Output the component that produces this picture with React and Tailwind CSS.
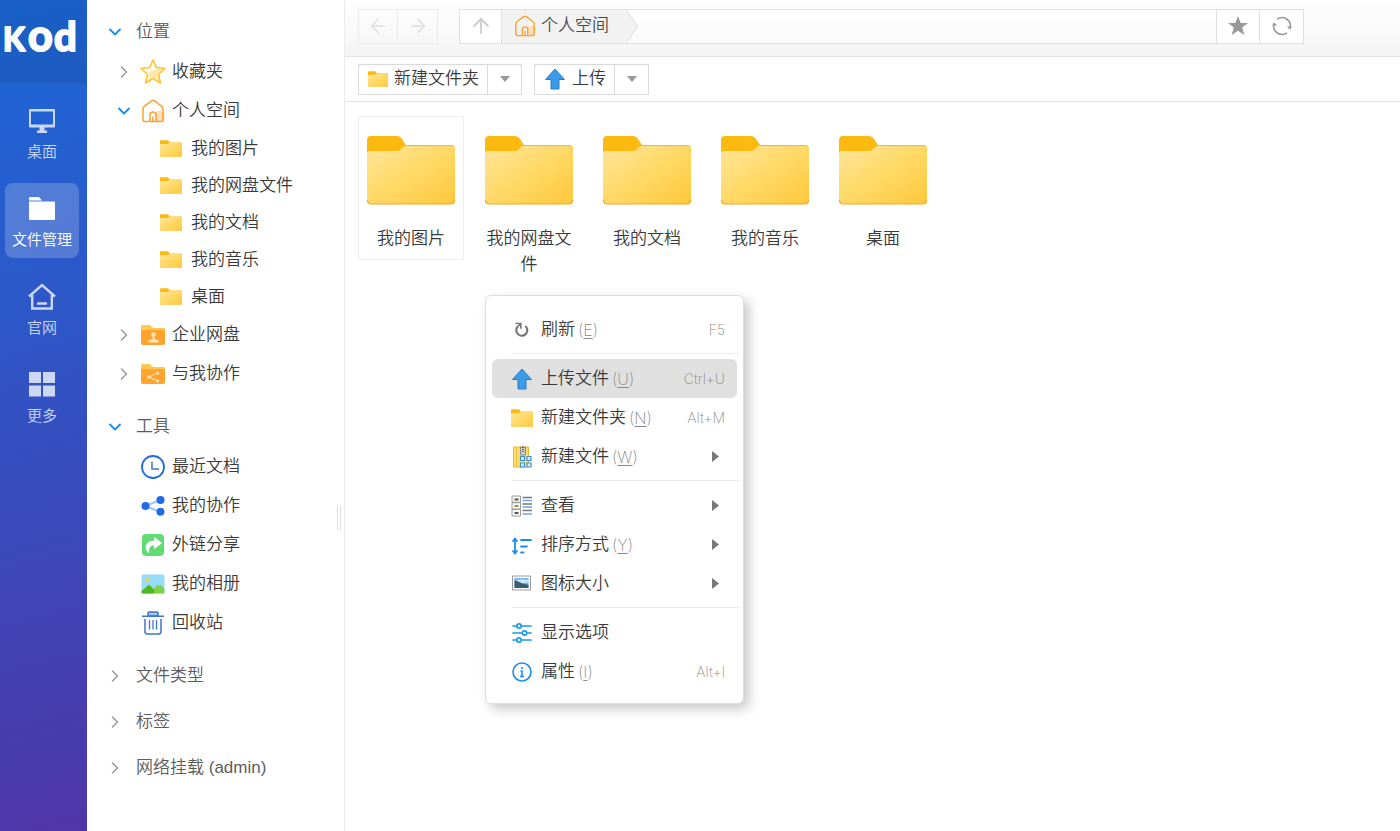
// ============================================
// App.jsx — kod file manager: rail, folder tree, toolbar, file grid, context menu
// ============================================
import { useId, useState } from 'react';
import { ArrowLeft, ArrowRight, ArrowUp, ChevronDown, ChevronRight } from 'lucide-react';

/* ---------- Folder icons ---------- */

const Folder = ({ className }) => {
    const id = useId();
    return (
        <svg className={className} viewBox="0 0 88 70" preserveAspectRatio="none" fill="none">
            <defs>
                <linearGradient id={id} x1="0" y1="0" x2="1" y2="1">
                    <stop offset="0" stopColor="#ffe599" />
                    <stop offset="0.5" stopColor="#ffd966" />
                    <stop offset="1" stopColor="#ffc83a" />
                </linearGradient>
            </defs>
            <path d="M0 5a4 4 0 014-4h25c3 0 5 1 6 3l4 6h45a4 4 0 014 4v20H0z" fill="#fcb90f" />
            <path d="M0 19a3 3 0 013-3h27c4 0 5-5 9-5h45a4 4 0 014 4v50a4 4 0 01-4 4H4a4 4 0 01-4-4z" fill={`url(#${id})`} />
            <path d="M.5 65a3.500 3.500 0 003.500 4h80a3.500 3.500 0 003.500-4" stroke="#eba92c" strokeWidth="1.200" />
        </svg>
    );
};

const OrangeFolder = ({ children }) => (
    <svg className="w-6 h-6" viewBox="0 0 24 24" fill="none">
        <path d="M0 3.500A1.500 1.500 0 011.500 2H9l3 3h11a1.500 1.500 0 011 1.500V12H0z" fill="#ffc84f" />
        <path d="M0 9a2 2 0 012-2h20a2 2 0 012 2v11a2 2 0 01-2 2H2a2 2 0 01-2-2z" fill="#ffa42e" />
        {children}
    </svg>
);

const CompanyFolder = () => (
    <OrangeFolder>
        <circle cx="12.500" cy="11.500" r="2.200" fill="#ffe3bd" />
        <path d="M11.500 12h2v4l4 1.500V19.500H7.500v-2l4-1.500z" fill="#ffe3bd" />
    </OrangeFolder>
);

const SharedFolder = () => (
    <OrangeFolder>
        <path d="M16.500 11L8 15l8.500 4" stroke="#ffe3bd" strokeWidth="1" />
        <circle cx="16.500" cy="11" r="1.500" fill="#ffe3bd" />
        <circle cx="8" cy="15" r="1.800" fill="#ffe3bd" />
        <circle cx="16.500" cy="19" r="1.500" fill="#ffe3bd" />
    </OrangeFolder>
);

/* ---------- Tree icons ---------- */

const StarIcon = () => (
    <svg className="w-[26px] h-[26px] -mx-px" viewBox="0 0 26 26" fill="none" strokeLinejoin="round">
        <path d="M13 1l3.400 7.600 8.600.9-6.400 5.700 1.900 8.800-7.500-4.300L5.500 24l1.900-8.800L1 9.500l8.600-.9z" fill="#fffbe8" />
        <path d="M16 10l9 0-6.400 5.200 1.900 8.800-7.500-4.300L8 22l1-8z" fill="#ffe9a8" />
        <path d="M13 1l3.400 7.600 8.600.9-6.400 5.700 1.900 8.800-7.500-4.300L5.500 24l1.900-8.800L1 9.500l8.600-.9z" stroke="#fcc32c" strokeWidth="1.500" />
    </svg>
);

const HomeIcon = ({ className = 'w-6 h-6' }) => (
    <svg className={className} viewBox="0 0 24 24" fill="none" strokeLinejoin="round">
        <rect x="14.500" y="12" width="9" height="11" rx="2" fill="#ffdfba" />
        <path d="M4 22.500A2 2 0 012 20.500V9.500C2 8.500 2.500 7.800 3.200 7.300L10.500 1.800a2.500 2.500 0 013 0l7.300 5.500c.7.500 1.200 1.200 1.200 2.200V20.500a2 2 0 01-2 2z" stroke="#ff9f2d" strokeWidth="1.500" />
        <path d="M9 22.500V16a3 3 0 016 0v6.500M12 17.500v5" stroke="#ff9f2d" strokeWidth="1.500" />
    </svg>
);

const ClockIcon = () => (
    <svg className="w-6 h-6" viewBox="0 0 24 24" fill="none">
        <circle cx="12" cy="12" r="11" stroke="#1f6be0" strokeWidth="1.800" />
        <path d="M11 6.500V14h7" stroke="#3f74d8" strokeWidth="1.500" />
    </svg>
);

const ShareIcon = () => (
    <svg className="w-6 h-6" viewBox="0 0 24 24" fill="none">
        <path d="M19.500 6L4 12l15.500 6" stroke="#a5c4fa" strokeWidth="2.200" />
        <circle cx="4.500" cy="12" r="4" fill="#1f6be6" />
        <circle cx="19.500" cy="6" r="4" fill="#1f6be6" />
        <circle cx="19.500" cy="17.800" r="4" fill="#1f6be6" />
    </svg>
);

const LinkIcon = () => (
    <svg className="w-6 h-6" viewBox="0 0 24 24" fill="none">
        <rect x="1" y="1" width="22" height="22" rx="4" fill="#5fdd72" />
        <path d="M13 3.800l8 6.200-8 6.200v-3.700c-4.200 0-5.200 2.500-5 7.700C4.500 17.500 4 13.500 5.500 11 7 8.500 9.500 7.800 13 7.800z" fill="#fff" />
    </svg>
);

const AlbumIcon = () => (
    <svg className="w-6 h-6" viewBox="0 0 24 24" fill="none">
        <rect x="0.500" y="2.500" width="23" height="19" rx="1.500" fill="#97dcfb" />
        <circle cx="6" cy="8" r="2.200" fill="#dcd96b" />
        <path d="M10 21.500l6-9 2 1.500 1.500-1.500 4 4.500v3.500a1 1 0 01-1 1z" fill="#7fd14c" />
        <path d="M.5 19L8 12.500l6 6-2 3H1.500a1 1 0 01-1-1z" fill="#4fb81c" />
    </svg>
);

const TrashIcon = () => (
    <svg className="w-6 h-6" viewBox="0 0 24 24" fill="none" stroke="#3d76d0" strokeWidth="1.500">
        <path d="M7 5V2a1 1 0 011-1h8a1 1 0 011 1v3z" fill="#a9c6f5" />
        <path d="M1 5.200h22M4 8v12.500A2.500 2.500 0 006.500 23h11a2.500 2.500 0 002.500-2.500V8" />
        <path d="M8.500 9v9.500M12 9v9.500M15.500 9v9.500" strokeWidth="1.300" />
    </svg>
);

/* ---------- Rail icons ---------- */

const DesktopIcon = () => (
    <svg className="w-7 h-7" viewBox="0 0 28 28">
        <path d="M2 2h24a1 1 0 011 1v16.500a1 1 0 01-1 1H2a1 1 0 01-1-1V3a1 1 0 011-1zm1 2.500v13h22v-13z" fill="currentColor" fillRule="evenodd" />
        <path d="M11.500 20h5v3.500H19V26H9v-2.500h2.500z" fill="currentColor" />
    </svg>
);

const FilesIcon = () => (
    <svg className="w-7 h-7" viewBox="0 0 28 28" fill="currentColor">
        <path d="M1 3a1 1 0 011-1h9l3 3.500H1zM1 6.500h25a1 1 0 011 1V24a1 1 0 01-1 1H2a1 1 0 01-1-1z" />
    </svg>
);

const SiteIcon = () => (
    <svg className="w-7 h-7" viewBox="0 0 28 28" fill="none" stroke="currentColor" strokeWidth="2.400">
        <path d="M1 13.500L14 2l13 11.500M4.200 12v13.500h19.600V12M9 20.500h10" />
    </svg>
);

const MoreIcon = () => (
    <svg className="w-7 h-7" viewBox="0 0 28 28" fill="currentColor">
        <path d="M1 1h12v11H1zM15 1h12v11H15zM1 14.500h12v11H1zM15 14.500h12v11H15z" />
    </svg>
);

/* ---------- Toolbar / menu icons ---------- */

const UploadIcon = () => (
    <svg className="w-[22px] h-[22px]" viewBox="0 0 22 22">
        <path d="M11 1l9.500 10.500H15V21H7v-9.500H1.500z" fill="#3c9be8" stroke="#2b7cc4" strokeWidth="1" strokeLinejoin="round" />
    </svg>
);

const SyncIcon = () => (
    <svg className="w-5 h-5" viewBox="0 0 20 20" fill="none" stroke="#999" strokeWidth="1.600">
        <path d="M5 3.200A8.400 8.400 0 0118.300 11M15 16.800A8.400 8.400 0 011.700 9" />
        <path d="M14.800 10.500h5l-1.600 3.200zM.2 9.500h5L1.800 6.300z" fill="#999" stroke="none" />
    </svg>
);

const ReloadIcon = () => (
    <svg className="w-[22px] h-[22px]" viewBox="0 0 22 22" fill="none" stroke="#777">
        <path d="M14.300 7A5.500 5.500 0 1 1 6.500 7.800" strokeWidth="2.200" />
        <path d="M4.500 4.500h5.300v5.200M9.500 4.800L6 8.500" strokeWidth="1.600" />
    </svg>
);

const NewFileIcon = () => (
    <svg className="w-[22px] h-[22px]" viewBox="0 0 22 22">
        <path d="M2.500 1h15v20h-15z" fill="#fde06a" stroke="#ecb52d" />
        <path d="M5.500 1v20" stroke="#efbd3e" />
        <path d="M9.500 1h5v8h-5z" fill="#cfcfcf" stroke="#888" />
        <path d="M12 1v5" stroke="#444" strokeDasharray="1 1" strokeWidth="1.500" />
        <g fill="#d8efff" stroke="#3c8fd4" strokeWidth="1.200">
            <path d="M9.500 10.500h4v4h-4zM16 10.500h4v4h-4zM9.500 17h4v4h-4zM16 17h4v4h-4z" />
        </g>
    </svg>
);

const ViewIcon = () => (
    <svg className="w-[22px] h-[22px]" viewBox="0 0 22 22" fill="none">
        <path d="M1 1h8.500v6.300H1zM1 7.700h8.500V14H1zM1 14.500h8.500V21H1z" fill="#fafafa" stroke="#9b9b9b" />
        <path d="M3.500 4.500h4M3.500 18h4" stroke="#555" strokeWidth="1.800" />
        <path d="M3.500 11h4" stroke="#9a8a20" strokeWidth="1.800" />
        <path d="M11.500 2.500H21M11.500 9H21M11.500 15.500H21" stroke="#777" strokeWidth="1.300" />
        <path d="M11.500 5.500H21M11.500 12H21M11.500 19H21" stroke="#6ea8e8" strokeWidth="1.500" />
    </svg>
);

const SortIcon = () => (
    <svg className="w-[22px] h-[22px]" viewBox="0 0 22 22" fill="none" stroke="#1a8cf0" strokeWidth="1.800" strokeLinecap="round" strokeLinejoin="round">
        <path d="M4 5v14M2 7l2-2.500L6 7M2 17l2 2.500L6 17" />
        <path d="M10 6h10M10 12.500h6M10 18.500h2.500" />
    </svg>
);

const PictureIcon = () => (
    <svg className="w-[22px] h-[22px]" viewBox="0 0 22 22">
        <path d="M1.500 3h18v14h-18z" fill="#fff" stroke="#9a9a9a" />
        <path d="M3.500 5h14v10h-14z" fill="#76b4f5" />
        <path d="M3.500 7c4 0 7 3 14 5v3h-14z" fill="#3a5d6b" />
        <path d="M3.500 7.500c3 0 5 2 8 3l6-1.500v-2l-8-.5z" fill="#cfe6fb" />
    </svg>
);

const OptionsIcon = () => (
    <svg className="w-[22px] h-[22px]" viewBox="0 0 22 22" fill="none" stroke="#1a9bf0" strokeWidth="1.700" strokeLinecap="round">
        <path d="M2 4h4M10.500 4H20M2 11h9M16 11h4M2 18h4M10.500 18H20" />
        <circle cx="8" cy="4" r="2.200" />
        <circle cx="13.500" cy="11" r="2.200" />
        <circle cx="8" cy="18" r="2.200" />
    </svg>
);

const InfoIcon = () => (
    <svg className="w-[22px] h-[22px]" viewBox="0 0 22 22" fill="none" stroke="#1a8cf0">
        <circle cx="11" cy="11" r="9" strokeWidth="1.600" />
        <path d="M9.500 10H11v5.500M9 15.500h4" strokeWidth="1.500" />
        <circle cx="11" cy="7" r="1.100" fill="#1a8cf0" stroke="none" />
    </svg>
);

/* ---------- Data ---------- */

const RAIL = [
    { label: '桌面', Icon: DesktopIcon },
    { label: '文件管理', Icon: FilesIcon },
    { label: '官网', Icon: SiteIcon },
    { label: '更多', Icon: MoreIcon },
];

const FOLDERS = ['我的图片', '我的网盘文件', '我的文档', '我的音乐', '桌面'];

const TOOLS = [
    { label: '最近文档', Icon: ClockIcon },
    { label: '我的协作', Icon: ShareIcon },
    { label: '外链分享', Icon: LinkIcon },
    { label: '我的相册', Icon: AlbumIcon },
    { label: '回收站', Icon: TrashIcon },
];

const MenuFolder = () => <Folder className="w-[22px] h-[18px]" />;

const MENU = [
    [{ label: '刷新', hint: 'E', keys: 'F5', Icon: ReloadIcon }],
    [
        { label: '上传文件', hint: 'U', keys: 'Ctrl+U', Icon: UploadIcon, active: true },
        { label: '新建文件夹', hint: 'N', keys: 'Alt+M', Icon: MenuFolder },
        { label: '新建文件', hint: 'W', sub: true, Icon: NewFileIcon },
    ],
    [
        { label: '查看', sub: true, Icon: ViewIcon },
        { label: '排序方式', hint: 'Y', sub: true, Icon: SortIcon },
        { label: '图标大小', sub: true, Icon: PictureIcon },
    ],
    [
        { label: '显示选项', Icon: OptionsIcon },
        { label: '属性', hint: 'I', keys: 'Alt+I', Icon: InfoIcon },
    ],
];

/* ---------- Pieces ---------- */

const Chevron = ({ open }) =>
    open ? (
        <ChevronDown className="w-5 h-5 text-[#1a8cf0] shrink-0" strokeWidth={2.2} />
    ) : (
        <ChevronRight className="w-5 h-5 text-[#999] shrink-0" strokeWidth={1.8} />
    );

const Section = ({ label, open, className = '' }) => (
    <button className={`flex items-center gap-[11px] w-full h-10 pl-[18px] text-[#5c5c5c] ${className}`}>
        <Chevron open={open} />
        <span>{label}</span>
    </button>
);

const TreeRow = ({ label, Icon, open }) => (
    <button className="flex items-center w-full h-[39px] pl-[27px]">
        {open === undefined ? <span className="w-5" /> : <Chevron open={open} />}
        <span className="w-6 mx-[7px] flex justify-center shrink-0"><Icon /></span>
        <span>{label}</span>
    </button>
);

const Rail = () => (
    <aside className="w-[87px] shrink-0 bg-[linear-gradient(165deg,#1b69d8_0%,#3153c4_45%,#4f35a8_100%)]">
        <a href="#home" aria-label="kod" className="block h-[83px] bg-black/8">
            <svg className="w-full h-full" viewBox="0 0 87 83" fill="#fff" stroke="#fff" strokeWidth="2" strokeLinejoin="round">
                <text y="51" className="font-['Lato'] font-bold">
                    <tspan x="3" className="text-[32px]">K</tspan>
                    <tspan x="28" className="text-[43px]">o</tspan>
                    <tspan x="54" className="text-[40px]">d</tspan>
                </text>
            </svg>
        </a>
        <nav className="flex flex-col gap-[13px] pt-3 pl-[5px]">
            {RAIL.map(({ label, Icon }) => (
                <a
                    key={label}
                    href="#rail"
                    className={`flex flex-col items-center gap-1 w-[74px] h-[75px] pt-3 rounded-lg text-[15px] leading-[26px] ${
                        label === '文件管理' ? 'bg-white/20 text-white' : 'text-[#ccd6f5]'
                    }`}
                >
                    <Icon />
                    <span>{label}</span>
                </a>
            ))}
        </nav>
    </aside>
);

const Tree = () => (
    <aside className="relative w-[258px] shrink-0 pt-3 border-r border-[#ebebeb]">
        <Section label="位置" open />
        <TreeRow label="收藏夹" Icon={StarIcon} open={false} />
        <TreeRow label="个人空间" Icon={HomeIcon} open />
        {FOLDERS.map(name => (
            <button key={name} className="flex items-center gap-[9px] w-full h-[37px] pl-[73px]">
                <Folder className="w-[22px] h-[17px]" />
                <span>{name}</span>
            </button>
        ))}
        <TreeRow label="企业网盘" Icon={CompanyFolder} open={false} />
        <TreeRow label="与我协作" Icon={SharedFolder} open={false} />

        <Section label="工具" open className="mt-3.5" />
        {TOOLS.map(t => <TreeRow key={t.label} {...t} />)}

        <Section label="文件类型" className="mt-3.5" />
        <Section label="标签" className="mt-1.5" />
        <Section label="网络挂载 (admin)" className="mt-1.5" />

        {/* Resize grip */}
        <span className="absolute right-[3px] top-[506px] w-1 h-6 border-x border-[#ddd] cursor-col-resize" />
    </aside>
);

const AddressBar = () => (
    <header className="flex items-center h-[57px] pl-[13px] pr-24 pb-1 border-b border-[#e4e4e4] bg-gradient-to-b from-white to-[#f4f4f4]">
        <div className="flex h-[35px] border border-[#ebebeb] divide-x divide-[#ebebeb] text-[#ddd]">
            <button aria-label="后退" className="w-[39px] flex items-center justify-center"><ArrowLeft className="w-[22px] h-[22px]" strokeWidth={1.5} /></button>
            <button aria-label="前进" className="w-[39px] flex items-center justify-center"><ArrowRight className="w-[22px] h-[22px]" strokeWidth={1.5} /></button>
        </div>
        <div className="flex flex-1 h-[35px] ml-[21px] border border-[#e0e0e0] divide-x divide-[#e0e0e0]">
            <button aria-label="上一级" className="w-[42px] flex items-center justify-center bg-white text-[#ccc]"><ArrowUp className="w-6 h-6" strokeWidth={1.8} /></button>
            <div className="flex flex-1 bg-gradient-to-b from-white to-[#fafafa]">
                <a href="#space" className="flex items-center gap-[5px] pl-3 pr-[17px] bg-[#f2f2f2] text-[#4a4a4a]">
                    <HomeIcon className="w-[22px] h-[22px]" />
                    <span>个人空间</span>
                </a>
                <svg className="w-[14px] h-[33px]" viewBox="0 0 14 33">
                    <path d="M0 0l12 16.500L0 33z" fill="#f2f2f2" />
                    <path d="M0 0l12 16.500L0 33" fill="none" stroke="#ddd" />
                </svg>
            </div>
            <button aria-label="收藏" className="w-[43px] flex items-center justify-center bg-white">
                <svg className="w-5 h-5" viewBox="0 0 20 20" fill="#999">
                    <path d="M10 0l2.700 7H20l-5.800 4.500L16.300 19 10 14.700 3.700 19l2.100-7.500L0 7h7.300z" />
                </svg>
            </button>
            <button aria-label="刷新" className="w-[43px] flex items-center justify-center bg-white"><SyncIcon /></button>
        </div>
    </header>
);

const SplitButton = ({ icon, label }) => (
    <div className="flex h-[31px] border border-[#dadada] divide-x divide-[#dadada]">
        <button className="flex items-center gap-1.5 pl-[9px] pr-2">
            {icon}
            <span>{label}</span>
        </button>
        <button aria-label={`${label}选项`} className="w-[33px] flex items-center justify-center">
            <svg className="w-2.5 h-1.5" viewBox="0 0 10 6" fill="#999"><path d="M0 0h10L5 6z" /></svg>
        </button>
    </div>
);

const ContextMenu = () => (
    <div role="menu" className="absolute left-[140px] top-[193px] w-[259px] pt-3.5 pb-3 px-1.5 bg-white border border-[#ddd] rounded-md shadow-[5px_5px_12px_rgba(0,0,0,0.22)]">
        {MENU.map((group, i) => (
            <div key={i}>
                {i > 0 && <div className="h-px mt-1 mb-[5px] ml-5 -mr-0.5 bg-[#ebebeb]" />}
                {group.map(({ label, hint, keys, sub, active, Icon }) => (
                    <button
                        key={label}
                        role="menuitem"
                        className={`flex items-center w-full h-[39px] pl-[19px] pr-3 rounded-md ${active ? 'bg-[#e0e0e0]' : ''}`}
                    >
                        <span className="w-[22px] mr-2 flex justify-center shrink-0"><Icon /></span>
                        <span>{label}</span>
                        {hint && (
                            <span className="ml-[3px] font-['Inter'] text-base font-extralight text-[#888]">
                                (<u className="underline-offset-2">{hint}</u>)
                            </span>
                        )}
                        {keys && <span className="ml-auto font-['Inter'] text-sm font-extralight text-[#888]">{keys}</span>}
                        {sub && (
                            <svg className="ml-auto mr-1.5 w-[7px] h-[11px]" viewBox="0 0 7 11" fill="#777"><path d="M0 0l7 5.500L0 11z" /></svg>
                        )}
                    </button>
                ))}
            </div>
        ))}
    </div>
);

export default function App() {
    const [selected, setSelected] = useState('我的图片');

    return (
        <div className="flex min-h-screen bg-white text-[17px] leading-[26px] font-[350] text-[#3a3a3a] font-['Liberation_Sans','Noto_Sans_CJK_SC',sans-serif]">
            <Rail />
            <Tree />
            <main className="flex-1 min-w-0 flex flex-col">
                <AddressBar />
                <div className="flex items-center gap-3 h-[45px] pl-[13px] border-b border-[#e4e4e4]">
                    <SplitButton icon={<Folder className="w-5 h-4" />} label="新建文件夹" />
                    <SplitButton icon={<UploadIcon />} label="上传" />
                </div>

                <section className="relative flex-1">
                    <div className="flex flex-wrap items-start gap-3 pl-[13px] pt-3.5">
                        {FOLDERS.map(name => (
                            <button
                                key={name}
                                onClick={() => setSelected(name)}
                                className={`flex flex-col items-center w-[106px] min-h-[144px] pt-[18px] px-2 pb-1.5 border ${
                                    selected === name ? 'border-[#eee]' : 'border-transparent'
                                }`}
                            >
                                <Folder className="w-[88px] h-[70px]" />
                                <span className="mt-[21px]">{name}</span>
                            </button>
                        ))}
                    </div>
                    <ContextMenu />
                </section>
            </main>
        </div>
    );
}
